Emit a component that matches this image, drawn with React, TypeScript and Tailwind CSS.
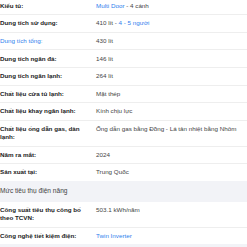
import React from "react";

type Part = { t: string; blue?: boolean };
type Row = { label: string; labelBlue?: boolean; value: Part[] };

const rows1: Row[] = [
  { label: "Kiểu tủ:", value: [{ t: "Multi Door", blue: true }, { t: " - 4 cánh" }] },
  { label: "Dung tích sử dụng:", value: [{ t: "410 lít - " }, { t: "4 - 5 người", blue: true }] },
  { label: "Dung tích tổng:", labelBlue: true, value: [{ t: "430 lít" }] },
  { label: "Dung tích ngăn đá:", value: [{ t: "146 lít" }] },
  { label: "Dung tích ngăn lạnh:", value: [{ t: "264 lít" }] },
  { label: "Chất liệu cửa tủ lạnh:", value: [{ t: "Mặt thép" }] },
  { label: "Chất liệu khay ngăn lạnh:", value: [{ t: "Kính chịu lực" }] },
  {
    label: "Chất liệu ống dẫn gas, dàn lạnh:",
    value: [{ t: "Ống dẫn gas bằng Đồng - Lá tản nhiệt bằng Nhôm" }],
  },
  { label: "Năm ra mắt:", value: [{ t: "2024" }] },
  { label: "Sản xuất tại:", value: [{ t: "Trung Quốc" }] },
];

const rows2: Row[] = [
  { label: "Công suất tiêu thụ công bố theo TCVN:", value: [{ t: "503.1 kWh/năm" }] },
  { label: "Công nghệ tiết kiệm điện:", value: [{ t: "Twin Inverter", blue: true }] },
];

function SpecRow({ r, last }: { r: Row; last?: boolean }) {
  return (
    <div
      className={`grid grid-cols-[96px_1fr] py-[4.15px] ${last ? "" : "border-b border-[#eeeeee]"}`}
    >
      <div
        className={`pr-[14px] ${r.labelBlue ? "text-[#2f80ed] font-normal" : "text-[#222222] font-semibold"}`}
      >
        {r.label}
      </div>
      <div className="text-[#444444] pr-1">
        {r.value.map((p, i) => (
          <span key={i} className={p.blue ? "text-[#2f80ed]" : ""}>
            {p.t}
          </span>
        ))}
      </div>
    </div>
  );
}

export default function App() {
  return (
    <div
      className="w-[247px] h-[247px] overflow-hidden bg-white text-[6.25px] leading-[8.3px]"
      style={{ fontFamily: '"Liberation Sans", Arial, sans-serif' }}
    >
      <div className="-mt-[2.3px]">
        {rows1.map((r, i) => (
          <SpecRow key={i} r={r} last={i === rows1.length - 1} />
        ))}
        <div className="bg-[#f2f3f7] h-[21px] flex items-center text-[#444444] text-[6.6px]">
          Mức tiêu thụ điện năng
        </div>
        {rows2.map((r, i) => (
          <SpecRow key={i} r={r} last={i === rows2.length - 1} />
        ))}
        <div className="bg-[#f2f3f7] h-[30px]" />
      </div>
    </div>
  );
}
